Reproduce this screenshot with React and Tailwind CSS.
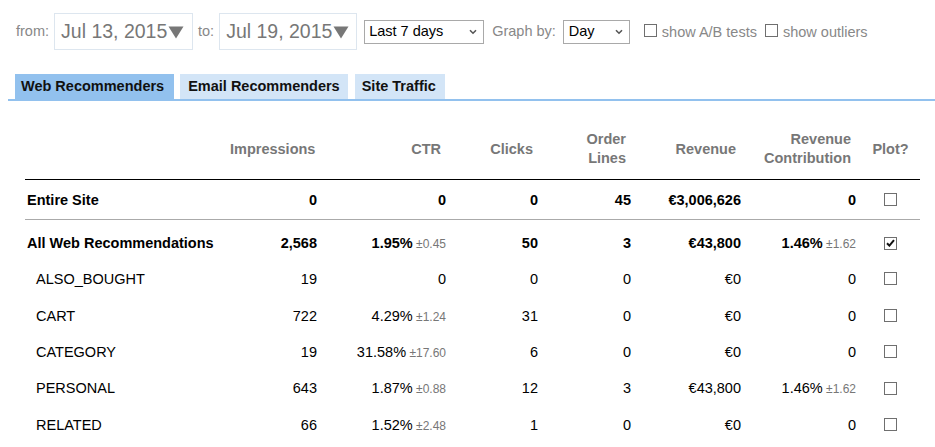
import React from "react";

const font = { fontFamily: '"Liberation Sans", Arial, sans-serif' };

function Box({ checked }) {
  return (
    <span className="inline-flex items-center justify-center w-[13px] h-[13px] border border-[#6f6f6f] bg-white align-middle">
      {checked && (
        <svg width="9" height="8" viewBox="0 0 9 8">
          <path d="M1 4.2 L3.4 6.6 L8 1.2" fill="none" stroke="#111" strokeWidth="2" />
        </svg>
      )}
    </span>
  );
}

function Chevron() {
  return (
    <svg width="8" height="6" viewBox="0 0 8 6" className="shrink-0">
      <path d="M1 1.2 L4 4.2 L7 1.2" fill="none" stroke="#555" strokeWidth="1.6" />
    </svg>
  );
}

function Tri() {
  return (
    <svg width="16" height="13" viewBox="0 0 16 13" className="ml-[1px] mt-[1px] shrink-0">
      <path d="M0.5 0.5 L15.5 0.5 L8 12.5 Z" fill="#777" />
    </svg>
  );
}

function Pm({ v }) {
  return <span className="text-[12px] text-[#777] font-normal"> ±{v}</span>;
}

const rows = [
  ["ALSO_BOUGHT", "19", "0", "0", "0", "€0", "0"],
  ["CART", "722", <>4.29%<Pm v="1.24" /></>, "31", "0", "€0", "0"],
  ["CATEGORY", "19", <>31.58%<Pm v="17.60" /></>, "6", "0", "€0", "0"],
  ["PERSONAL", "643", <>1.87%<Pm v="0.88" /></>, "12", "3", "€43,800", <>1.46%<Pm v="1.62" /></>],
  ["RELATED", "66", <>1.52%<Pm v="2.48" /></>, "1", "0", "€0", "0"],
];

export default function App() {
  return (
    <div className="bg-white w-[935px] h-[447px] overflow-hidden pl-[8px] text-[14.5px] text-black" style={font}>
      {/* controls */}
      <div className="flex items-center ml-[8px] mt-[13px] h-[37px] text-[#888]">
        <span>from:</span>
        <div className="ml-[5px] w-[139px] h-[37px] border border-[#dde6ef] flex items-center pl-[6px] text-[19.5px] text-[#777]">
          Jul 13, 2015<Tri />
        </div>
        <span className="ml-[5px]">to:</span>
        <div className="ml-[5px] w-[138px] h-[37px] border border-[#dde6ef] flex items-center pl-[6px] text-[19.5px] text-[#777]">
          Jul 19, 2015<Tri />
        </div>
        <div className="ml-[7px] w-[120px] h-[24px] border border-[#a9a9a9] flex items-center justify-between pl-[4px] pr-[6px] text-black mt-[1px]">
          <span>Last 7 days</span>
          <Chevron />
        </div>
        <span className="ml-[8px]">Graph by:</span>
        <div className="ml-[7px] w-[67px] h-[24px] border border-[#a9a9a9] flex items-center justify-between pl-[5px] pr-[6px] text-black mt-[1px]">
          <span>Day</span>
          <Chevron />
        </div>
        <span className="ml-[14px] -mt-[3px] flex"><Box /></span>
        <span className="ml-[5px] mt-[2px]">show A/B tests</span>
        <span className="ml-[8px] -mt-[3px] flex"><Box /></span>
        <span className="ml-[5px] mt-[2px]">show outliers</span>
      </div>

      {/* tabs */}
      <div className="mt-[24px] border-b-2 border-[#92c1ee] flex pl-[7px] font-bold text-[#111]">
        <div className="h-[25px] flex items-center pl-[6px] pr-[10px] bg-[#92c1ee]">Web Recommenders</div>
        <div className="ml-[6px] h-[25px] flex items-center pl-[8px] pr-[8px] bg-[#d3e5f7]">Email Recommenders</div>
        <div className="ml-[7px] h-[25px] flex items-center pl-[7px] pr-[9px] bg-[#d3e5f7]">Site Traffic</div>
      </div>

      {/* table */}
      <table className="ml-[17px] mt-[17px] w-[895px] table-fixed border-collapse">
        <colgroup>
          <col className="w-[205px]" />
          <col className="w-[92px]" />
          <col className="w-[129px]" />
          <col className="w-[92px]" />
          <col className="w-[93px]" />
          <col className="w-[110px]" />
          <col className="w-[115px]" />
          <col className="w-[59px]" />
        </colgroup>
        <thead>
          <tr className="h-[61px] border-b border-black text-[#777] font-bold leading-[19px]">
            <th className="pt-[2px]"></th>
            <th className="text-right pr-[10px] pt-[2px]">Impressions</th>
            <th className="text-right pr-[10px] pt-[2px]">CTR</th>
            <th className="text-right pr-[10px] pt-[2px]">Clicks</th>
            <th className="text-right pr-[10px] pt-[2px]">Order<br />Lines</th>
            <th className="text-right pr-[10px] pt-[2px]">Revenue</th>
            <th className="text-right pr-[10px] pt-[2px]">Revenue<br />Contribution</th>
            <th className="text-center pt-[2px]">Plot?</th>
          </tr>
        </thead>
        <tbody>
          <tr className="h-[40px] border-b border-[#aaa] font-bold">
            <td className="pl-[2px] pt-[4px]">Entire Site</td>
            <td className="text-right pr-[5px] pt-[4px]">0</td>
            <td className="text-right pr-[5px] pt-[4px]">0</td>
            <td className="text-right pr-[5px] pt-[4px]">0</td>
            <td className="text-right pr-[5px] pt-[4px]">45</td>
            <td className="text-right pr-[5px] pt-[4px]">€3,006,626</td>
            <td className="text-right pr-[5px] pt-[4px]">0</td>
            <td className="text-center"><Box /></td>
          </tr>
          <tr className="h-[41px] font-bold">
            <td className="pl-[2px] pt-[9px]">All Web Recommendations</td>
            <td className="text-right pr-[5px] pt-[9px]">2,568</td>
            <td className="text-right pr-[5px] pt-[9px]">1.95%<Pm v="0.45" /></td>
            <td className="text-right pr-[5px] pt-[9px]">50</td>
            <td className="text-right pr-[5px] pt-[9px]">3</td>
            <td className="text-right pr-[5px] pt-[9px]">€43,800</td>
            <td className="text-right pr-[5px] pt-[9px]">1.46%<Pm v="1.62" /></td>
            <td className="text-center pt-[6px]"><Box checked /></td>
          </tr>
          {rows.map((r, i) => (
            <tr key={i} className="h-[36.4px]">
              <td className="pl-[11px] pt-[4px]">{r[0]}</td>
              {r.slice(1).map((c, j) => (
                <td key={j} className="text-right pr-[5px] pt-[4px]">{c}</td>
              ))}
              <td className="text-center pt-[1px]"><Box /></td>
            </tr>
          ))}
        </tbody>
      </table>
    </div>
  );
}
